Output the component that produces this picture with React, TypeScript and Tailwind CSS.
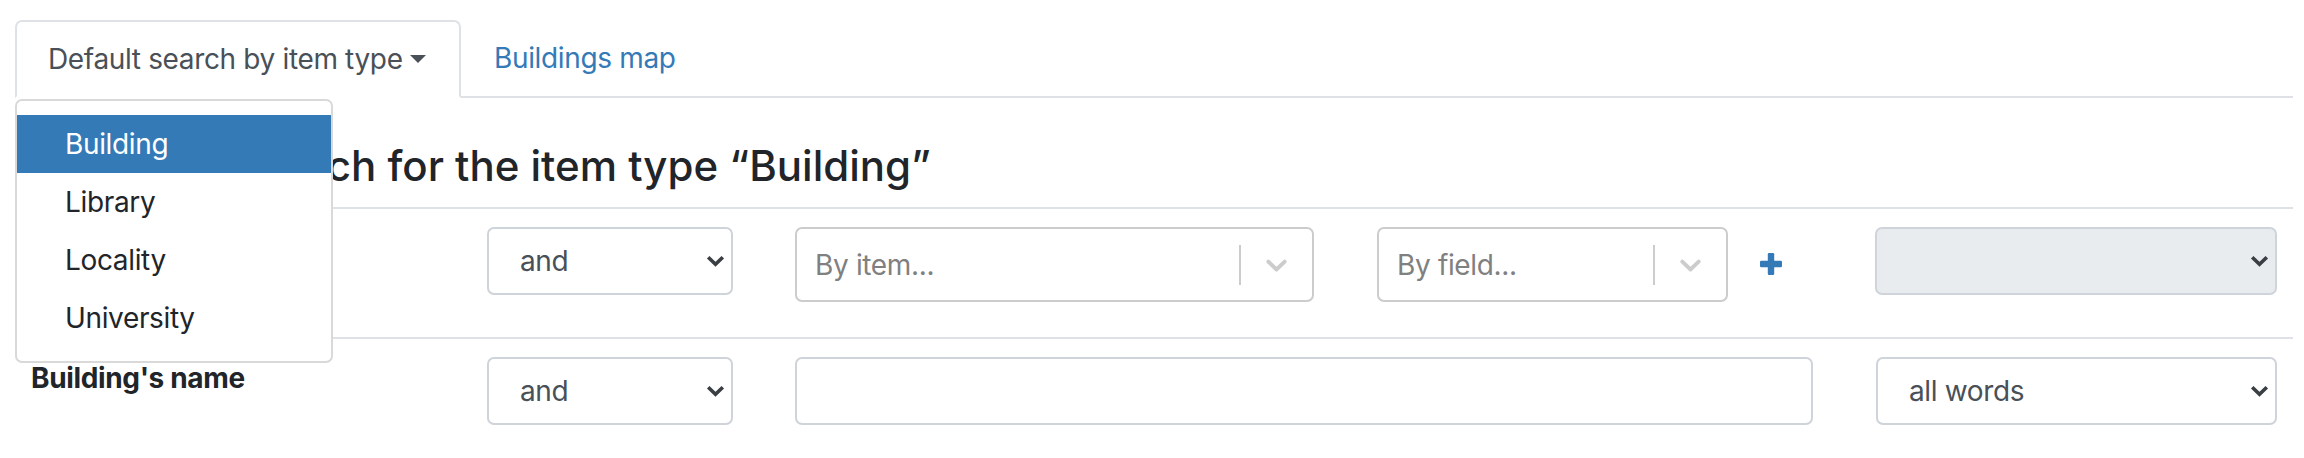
import React from "react";

const Chevron = () => (
  <svg width="19" height="12" viewBox="0 0 19 12" className="shrink-0">
    <path d="M2.2 2.2 L9.5 9.3 L16.8 2.2" fill="none" stroke="#3a3f44" strokeWidth="3.6" strokeLinecap="butt" strokeLinejoin="miter" />
  </svg>
);

const RSChevron = () => (
  <svg width="35" height="35" viewBox="0 0 20 20" className="shrink-0">
    <path
      fill="#cccccc"
      d="M4.516 7.548c0.436-0.446 1.043-0.481 1.576 0l3.908 3.747 3.908-3.747c0.533-0.481 1.141-0.446 1.574 0 0.436 0.445 0.408 1.197 0 1.615-0.406 0.418-4.695 4.502-4.695 4.502-0.217 0.223-0.502 0.335-0.787 0.335s-0.57-0.112-0.789-0.335c0 0-4.287-4.084-4.695-4.502s-0.436-1.17 0-1.615z"
    />
  </svg>
);

const NativeSelect = ({ value, width, disabled }: { value: string; width: string; disabled?: boolean }) => (
  <div
    className={`${width} h-[68px] shrink-0 flex items-center justify-between rounded-[7px] border-2 border-[#ced4da] pl-[31px] pr-[6px] text-[28px] leading-[42px] text-[#495057] ${
      disabled ? "bg-[#e9ecef]" : "bg-white"
    }`}
  >
    <span>{value}</span>
    <Chevron />
  </div>
);

const ReactSelect = ({ placeholder, width }: { placeholder: string; width: string }) => (
  <div className={`${width} h-[75px] shrink-0 flex items-center rounded-[7px] border-2 border-[#cccccc] bg-white`}>
    <div className="flex-1 pl-[18px] text-[28px] leading-[42px] text-[#808080]">{placeholder}</div>
    <div className="w-[2px] h-[40px] bg-[#cccccc]" />
    <div className="w-[71px] flex items-center justify-center">
      <RSChevron />
    </div>
  </div>
);

export default function App() {
  return (
    <div className="w-[2304px] h-[458px] overflow-hidden bg-white pl-[15px] pr-[11px] pt-[20px] font-[Inter,sans-serif] tracking-[-0.35px] text-[#212529]">
      {/* Tabs */}
      <div className="flex h-[78px] border-b-2 border-[#dee2e6]">
        <div className="relative z-20 -mb-[2px] h-[78px] w-[446px] shrink-0 flex items-center rounded-t-[7px] border-2 border-[#dee2e6] border-b-white bg-white pl-[31px] text-[28px] leading-[42px] text-[#495057]">
          <span>Default search by item type</span>
          <span className="ml-[7px] inline-block h-0 w-0 border-x-[8px] border-t-[8.5px] border-x-transparent border-t-[#495057]" />
          {/* Dropdown menu */}
          <div className="absolute left-[-2px] top-[77px] w-[318px] rounded-[7px] border-2 border-[rgba(0,0,0,0.15)] bg-white py-[14px] text-[28px] leading-[42px] text-[#212529]">
            <div className="h-[58px] flex items-center bg-[#337ab7] pl-[48px] text-white">Building</div>
            <div className="h-[58px] flex items-center pl-[48px]">Library</div>
            <div className="h-[58px] flex items-center pl-[48px]">Locality</div>
            <div className="h-[58px] flex items-center pl-[48px]">University</div>
          </div>
        </div>
        <div className="flex items-center pl-[33px] text-[28px] leading-[42px] text-[#337ab7]">Buildings map</div>
      </div>

      {/* Heading */}
      <div className="h-[109px] pt-[43px]">
        <h3 className="ml-[10px] text-[42px] font-medium leading-[50px] tracking-normal text-[#212529]">
          Advanced search for the item type “Building”
        </h3>
      </div>

      {/* Row 1 */}
      <div className="flex h-[130px] items-start border-t-2 border-[#dee2e6] pt-[18px]">
        <div className="w-[472px] shrink-0" />
        <NativeSelect value="and" width="w-[246px]" />
        <div className="ml-[62px]">
          <ReactSelect placeholder="By item..." width="w-[519px]" />
        </div>
        <div className="ml-[63px]">
          <ReactSelect placeholder="By field..." width="w-[351px]" />
        </div>
        <div className="ml-[32px] mt-[26px] w-[22px] shrink-0">
          <svg width="22" height="22" viewBox="0 0 22 22">
            <rect x="7.8" y="0" width="6.4" height="22" rx="1.2" fill="#337ab7" />
            <rect x="0" y="7.8" width="22" height="6.4" rx="1.2" fill="#337ab7" />
          </svg>
        </div>
        <div className="ml-[93px]">
          <NativeSelect value="" width="w-[402px]" disabled />
        </div>
      </div>

      {/* Row 2 */}
      <div className="flex h-[130px] items-start border-t-2 border-[#dee2e6] pt-[18px]">
        <div className="w-[472px] shrink-0 pl-[16px] text-[28px] font-bold leading-[42px] text-[#212529]">
          Building's name
        </div>
        <NativeSelect value="and" width="w-[246px]" />
        <div className="ml-[62px] h-[68px] w-[1018px] shrink-0 rounded-[7px] border-2 border-[#ced4da] bg-white" />
        <div className="ml-[63px]">
          <NativeSelect value="all words" width="w-[401px]" />
        </div>
      </div>
    </div>
  );
}
